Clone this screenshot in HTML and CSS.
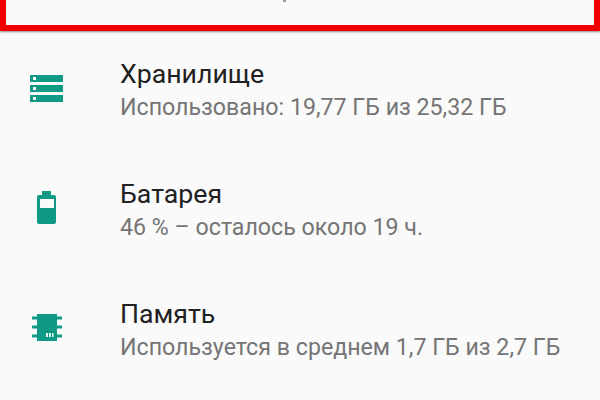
FILE: index.html
```html
<!DOCTYPE html>
<html lang="ru">
<head>
<meta charset="utf-8">
<title>Настройки</title>
<link rel="stylesheet" href="styles.css">
</head>
<body>
<div class="highlight"><span class="tick"></span></div>
<ul class="list">
  <li class="row">
    <div class="icon">
      <svg width="34" height="28" viewBox="0 0 34 28"><path fill="#0f9a85" fill-rule="evenodd" d="M0 1h33v7H0zM3 3v3h3V3zM0 11h33v7H0zM3 13v3h3v-3zM0 21h33v7H0zM3 23v3h3v-3z"/></svg>
    </div>
    <div class="text">
      <div class="title">Хранилище</div>
      <div class="sub">Использовано: 19,77 ГБ из 25,32 ГБ</div>
    </div>
  </li>
  <li class="row">
    <div class="icon">
      <svg width="34" height="34" viewBox="0 0 34 34"><path fill="#0f9a85" fill-rule="evenodd" d="M12 0h9v4h3a2 2 0 0 1 2 2v25a2 2 0 0 1-2 2H9a2 2 0 0 1-2-2V6a2 2 0 0 1 2-2h3zM10 8v9h14V8z"/></svg>
    </div>
    <div class="text">
      <div class="title">Батарея</div>
      <div class="sub">46 % – осталось около 19 ч.</div>
    </div>
  </li>
  <li class="row">
    <div class="icon">
      <svg width="34" height="30" viewBox="0 0 34 30"><path fill="#0f9a85" d="M7 1h20v27H7zM2 3.500h30v3H2zM2 12.500h30v3H2zM2 21.500h30v3H2z"/><path fill="#e4f3f0" d="M16 20h2v4h-2zM19 20h2v4h-2zM22 20h1.500v4H22z"/></svg>
    </div>
    <div class="text">
      <div class="title">Память</div>
      <div class="sub">Используется в среднем 1,7 ГБ из 2,7 ГБ</div>
    </div>
  </li>
</ul>
</body>
</html>
```
FILE: styles.css
```css
html, body {
  margin: 0;
  padding: 0;
  width: 600px;
  height: 400px;
  overflow: hidden;
  background: #fafafa;
  font-family: Roboto, "Noto Sans", sans-serif;
}
.highlight {
  box-sizing: border-box;
  width: 600px;
  height: 31px;
  border: solid #f00000;
  border-width: 0 6px 6px 6.500px;
  background: #fafafa;
  box-shadow: 0 1px 2px rgba(60, 40, 40, 0.55);
  display: flex;
  justify-content: center;
}
.tick {
  width: 3px;
  height: 2px;
  margin-right: 32px;
  background: #999;
}
.list {
  list-style: none;
  margin: 0;
  padding: 0 0 0 30px;
}
.row {
  display: flex;
  align-items: center;
  height: 120px;
  gap: 56px;
}
.icon {
  width: 34px;
  padding-bottom: 6px;
  display: flex;
  justify-content: center;
}
.title {
  font-size: 26.7px;
  line-height: 30px;
  color: #212121;
}
.sub {
  margin-top: 2px;
  font-size: 23.2px;
  line-height: 32px;
  color: #757575;
}
```
